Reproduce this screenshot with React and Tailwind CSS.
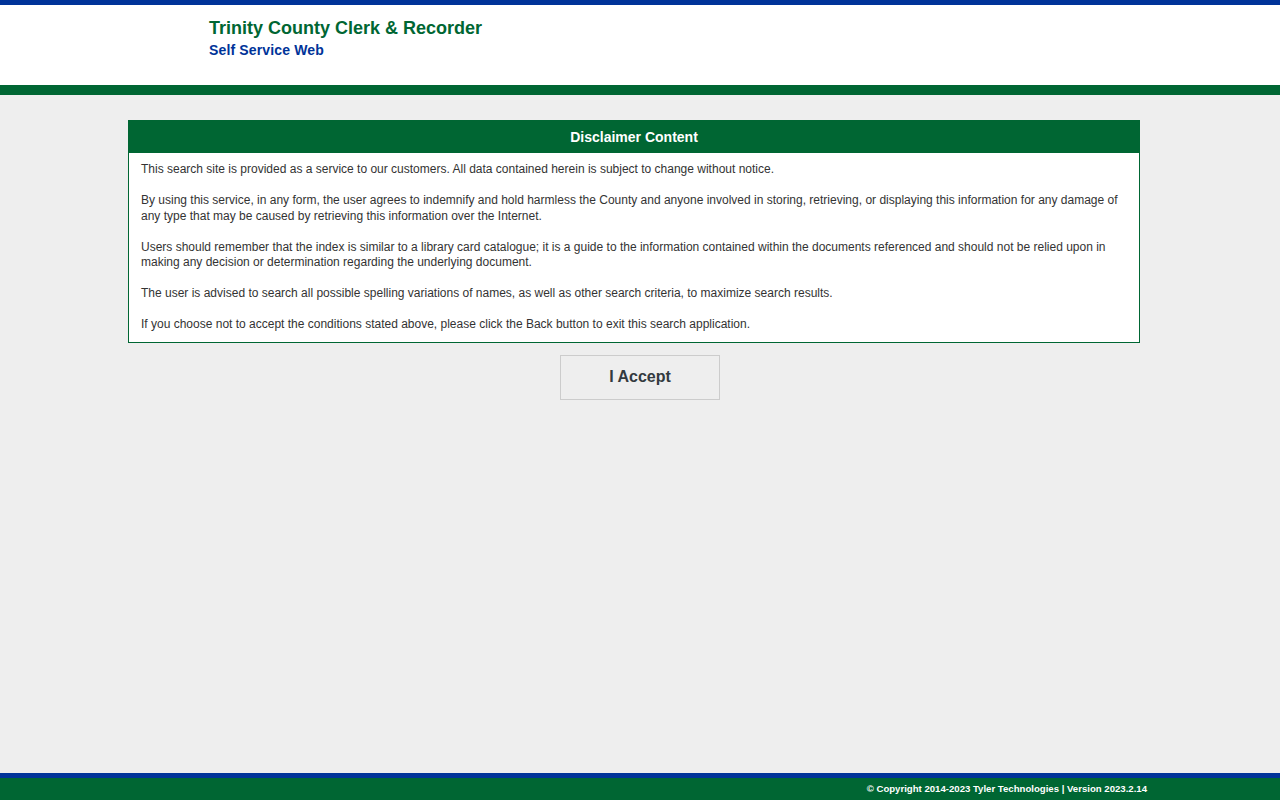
import React from "react";

const paragraphs = [
  "This search site is provided as a service to our customers. All data contained herein is subject to change without notice.",
  "By using this service, in any form, the user agrees to indemnify and hold harmless the County and anyone involved in storing, retrieving, or displaying this information for any damage of any type that may be caused by retrieving this information over the Internet.",
  "Users should remember that the index is similar to a library card catalogue; it is a guide to the information contained within the documents referenced and should not be relied upon in making any decision or determination regarding the underlying document.",
  "The user is advised to search all possible spelling variations of names, as well as other search criteria, to maximize search results.",
  "If you choose not to accept the conditions stated above, please click the Back button to exit this search application.",
];

const App = () => {
  return (
    <div
      className="min-h-screen h-[800px] flex flex-col bg-[#eeeeee]"
      style={{ fontFamily: '"Liberation Sans", Arial, sans-serif' }}
    >
      {/* Header */}
      <div className="border-t-[5px] border-[#003399] bg-white h-[85px] pl-[209px] pt-[12px]">
        <h1 className="text-[18px] leading-[22px] font-bold text-[#006633]">Trinity County Clerk &amp; Recorder</h1>
        <h2 className="text-[14px] leading-[18px] font-bold text-[#003399] tracking-[0.15px] mt-[2px]">Self Service Web</h2>
      </div>
      <div className="h-[10px] bg-[#006633]" />

      {/* Disclaimer */}
      <div className="flex-1 pt-[25px]">
        <div className="ml-[128px] w-[1012px] border border-[#006633] bg-white">
          <div className="bg-[#006633] h-[32px] flex items-center justify-center text-white font-bold text-[14px]">
            Disclaimer Content
          </div>
          <div className="px-[12px] pt-[9px] pb-[9px] text-[12px] leading-[15.5px] text-[#333333]">
            {paragraphs.map((p, i) => (
              <p key={i} className={i > 0 ? "mt-[15.5px]" : ""}>
                {p}
              </p>
            ))}
          </div>
        </div>
        <div className="flex justify-center mt-[12px]">
          <button className="w-[160px] h-[45px] bg-[#eeeeee] border border-[#cccccc] text-[16px] font-bold text-[#333a40]">
            I Accept
          </button>
        </div>
      </div>

      {/* Footer */}
      <div className="border-t-[5px] border-[#003399] bg-[#006633] h-[27px] flex items-center justify-end pr-[133px]">
        <span className="text-white font-bold text-[9.6px] leading-[14px] -mt-[1px]">
          © Copyright 2014-2023 Tyler Technologies | Version 2023.2.14
        </span>
      </div>
    </div>
  );
};

export default App;
